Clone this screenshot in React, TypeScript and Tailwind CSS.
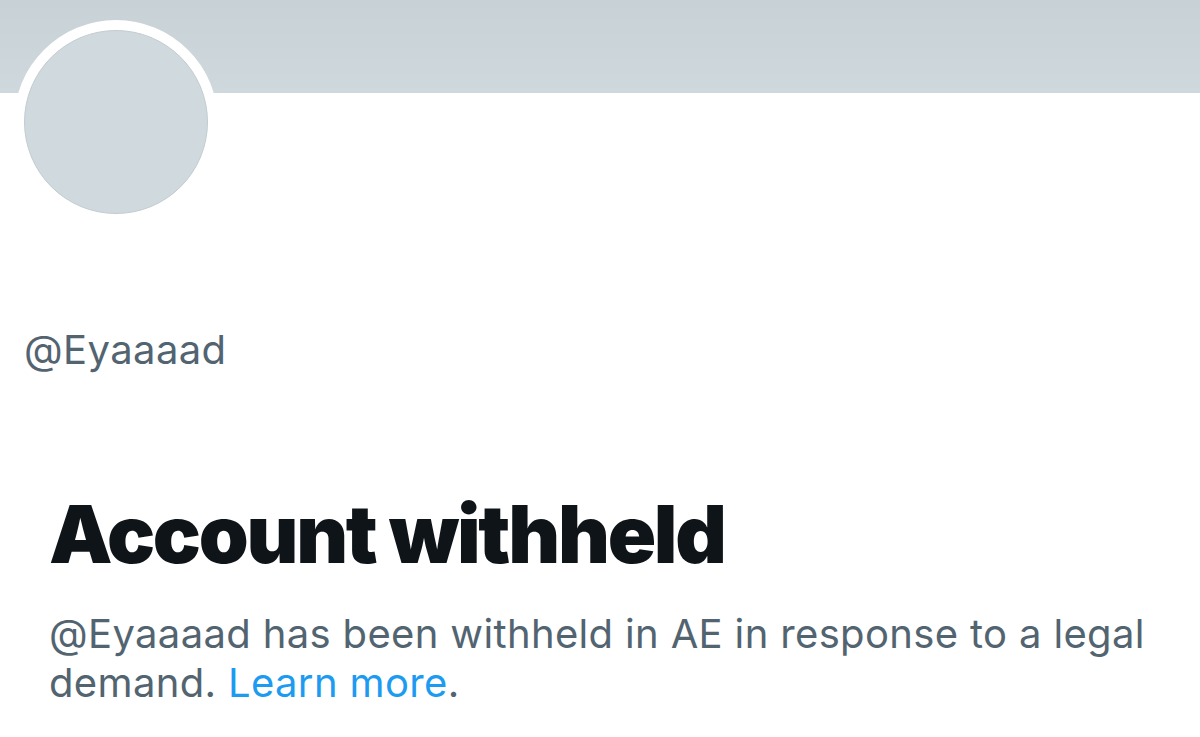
import React from "react"

const App: React.FC = () => {
  return (
    <div className="min-h-screen w-[1200px] bg-white overflow-hidden font-['Inter','Liberation_Sans',sans-serif]">
      {/* Banner */}
      <div className="h-[93px] bg-gradient-to-b from-[#c8d1d6] to-[#cfd8dd]"></div>

      {/* Avatar overlapping the banner */}
      <div className="pl-[14px] -mt-[73px]">
        <div className="w-[204px] h-[204px] rounded-full bg-white p-[10px]">
          <div className="w-full h-full rounded-full bg-[#cfd9de] border border-[#c3ccd1]"></div>
        </div>
      </div>

      {/* Handle */}
      <div className="pl-[24px] mt-[102px]">
        <p className="text-[40px] leading-[48px] text-[#536471] tracking-[0.4px]">@Eyaaaad</p>
      </div>

      {/* Withheld notice */}
      <div className="pl-[49px] pr-[40px] mt-[120px]">
        <h1 className="text-[80px] leading-[80px] font-black text-[#0f1419] tracking-[-2.3px]">
          Account withheld
        </h1>
        <p className="mt-[35px] text-[40px] leading-[49px] text-[#536471] tracking-[0.35px] max-w-[1120px]">
          @Eyaaaad has been withheld in AE in response to a legal demand.{" "}
          <span className="text-[#1d9bf0]">Learn more</span>.
        </p>
      </div>
    </div>
  )
}

export default App
